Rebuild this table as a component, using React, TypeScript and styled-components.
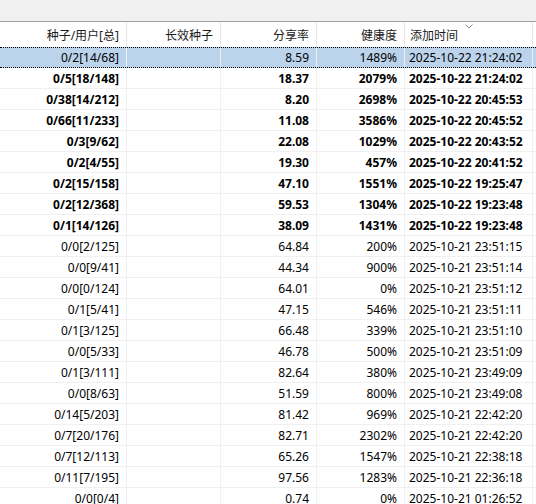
import React from "react";
import styled, { createGlobalStyle, css } from "styled-components";

const Global = createGlobalStyle`
  html, body { margin: 0; padding: 0; background: #ffffff; }
  body {
    font-family: "Noto Sans", "Noto Sans CJK SC", sans-serif;
    font-size: 12px;
    color: #000;
  }
`;

const COLS = "127px 94px 96px 88px 128px";

const Page = styled.div`
  width: 536px;
  height: 504px;
  overflow: hidden;
  background: #fff;
`;

const TopBar = styled.div`
  height: 21px;
  background: #f0f0f0;
  border-bottom: 1px solid #a0a0a0;
`;

const HeaderRow = styled.div`
  display: grid;
  grid-template-columns: ${COLS};
  height: 25px;
`;

const HeaderCell = styled.div<{ $align: "left" | "right" }>`
  position: relative;
  display: flex;
  align-items: center;
  justify-content: ${(p) => (p.$align === "left" ? "flex-start" : "flex-end")};
  padding: ${(p) => (p.$align === "left" ? "1px 0 0 5px" : "1px 7px 0 0")};
  border-right: 1px solid #e5e5e5;
  white-space: nowrap;
  color: #1a1a1a;
`;

const SortMark = styled.svg`
  position: absolute;
  top: 2px;
  left: 60px;
`;

const Row = styled.div<{ $selected?: boolean; $bold?: boolean }>`
  display: grid;
  grid-template-columns: ${COLS};
  height: 21px;
  box-sizing: border-box;
  border-bottom: 1px solid #f0f0f0;
  font-weight: ${(p) => (p.$bold ? 700 : 400)};
  ${(p) =>
    p.$selected &&
    css`
      background: #bcd3ec;
      border-top: 1px dotted #000;
      border-bottom: 1px dotted #000;
    `}
`;

const Cell = styled.div<{ $align: "left" | "right" }>`
  display: flex;
  align-items: center;
  justify-content: ${(p) => (p.$align === "left" ? "flex-start" : "flex-end")};
  padding: ${(p) => (p.$align === "left" ? "0 0 0 4px" : "0 7px 0 0")};
  border-right: 1px solid #f0f0f0;
  white-space: nowrap;
  overflow: hidden;
`;

type R = [string, string, string, string];

const rows: R[] = [
  ["0/2[14/68]", "8.59", "1489%", "2025-10-22 21:24:02"],
  ["0/5[18/148]", "18.37", "2079%", "2025-10-22 21:24:02"],
  ["0/38[14/212]", "8.20", "2698%", "2025-10-22 20:45:53"],
  ["0/66[11/233]", "11.08", "3586%", "2025-10-22 20:45:52"],
  ["0/3[9/62]", "22.08", "1029%", "2025-10-22 20:43:52"],
  ["0/2[4/55]", "19.30", "457%", "2025-10-22 20:41:52"],
  ["0/2[15/158]", "47.10", "1551%", "2025-10-22 19:25:47"],
  ["0/2[12/368]", "59.53", "1304%", "2025-10-22 19:23:48"],
  ["0/1[14/126]", "38.09", "1431%", "2025-10-22 19:23:48"],
  ["0/0[2/125]", "64.84", "200%", "2025-10-21 23:51:15"],
  ["0/0[9/41]", "44.34", "900%", "2025-10-21 23:51:14"],
  ["0/0[0/124]", "64.01", "0%", "2025-10-21 23:51:12"],
  ["0/1[5/41]", "47.15", "546%", "2025-10-21 23:51:11"],
  ["0/1[3/125]", "66.48", "339%", "2025-10-21 23:51:10"],
  ["0/0[5/33]", "46.78", "500%", "2025-10-21 23:51:09"],
  ["0/1[3/111]", "82.64", "380%", "2025-10-21 23:49:09"],
  ["0/0[8/63]", "51.59", "800%", "2025-10-21 23:49:08"],
  ["0/14[5/203]", "81.42", "969%", "2025-10-21 22:42:20"],
  ["0/7[20/176]", "82.71", "2302%", "2025-10-21 22:42:20"],
  ["0/7[12/113]", "65.26", "1547%", "2025-10-21 22:38:18"],
  ["0/11[7/195]", "97.56", "1283%", "2025-10-21 22:36:18"],
  ["0/0[0/4]", "0.74", "0%", "2025-10-21 01:26:52"],
];

export default function App() {
  return (
    <Page>
      <Global />
      <TopBar />
      <HeaderRow>
        <HeaderCell $align="right">种子/用户[总]</HeaderCell>
        <HeaderCell $align="right">长效种子</HeaderCell>
        <HeaderCell $align="right">分享率</HeaderCell>
        <HeaderCell $align="right">健康度</HeaderCell>
        <HeaderCell $align="left">
          添加时间
          <SortMark width="8" height="5" viewBox="0 0 8 5">
            <path d="M0.5 0.5 L4 4 L7.5 0.5" fill="none" stroke="#888" strokeWidth="1" />
          </SortMark>
        </HeaderCell>
      </HeaderRow>
      {rows.map((r, i) => (
        <Row key={i} $selected={i === 0} $bold={i >= 1 && i <= 8}>
          <Cell $align="right">{r[0]}</Cell>
          <Cell $align="right"></Cell>
          <Cell $align="right">{r[1]}</Cell>
          <Cell $align="right">{r[2]}</Cell>
          <Cell $align="left">{r[3]}</Cell>
        </Row>
      ))}
    </Page>
  );
}
